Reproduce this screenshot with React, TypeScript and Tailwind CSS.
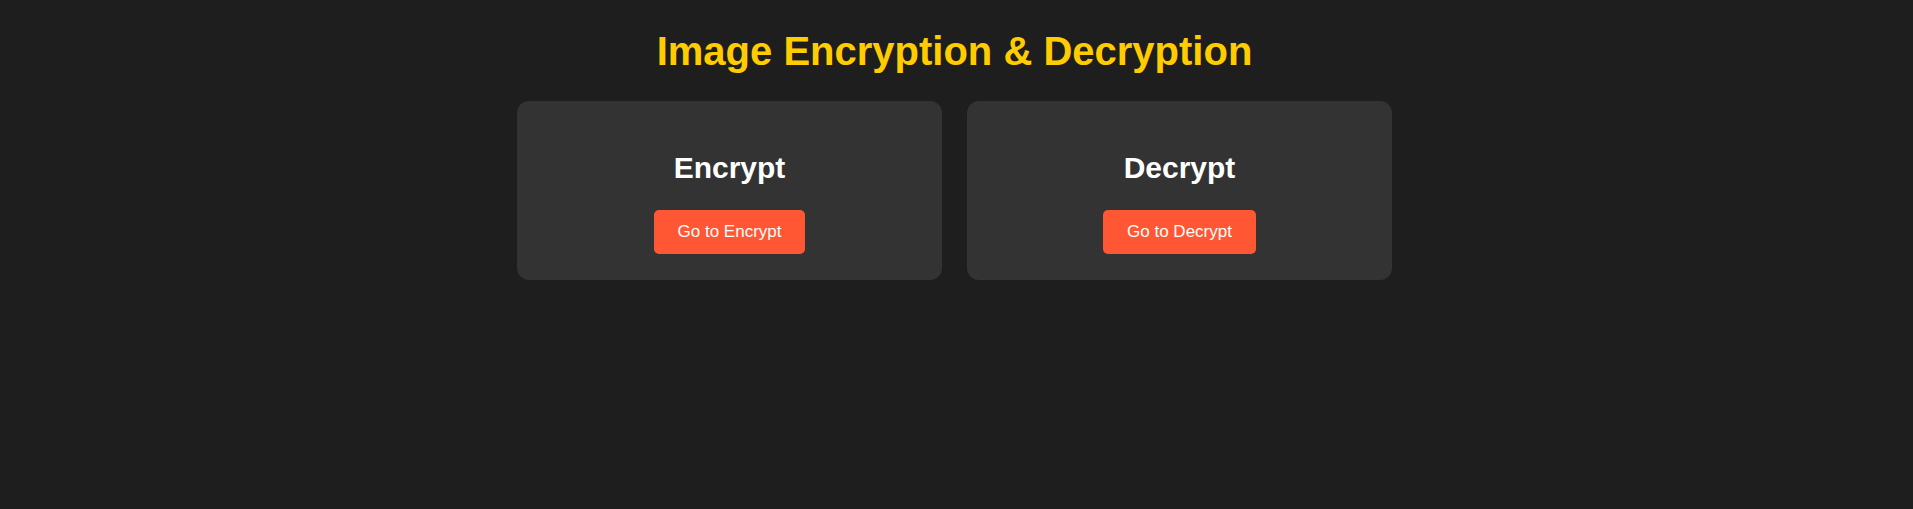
import React from "react";

function Card({ title, label }: { title: string; label: string }) {
  return (
    <div className="w-[425px] h-[179px] bg-[#333333] rounded-[12px] flex flex-col items-center pt-[50px]">
      <h2 className="text-[30px] font-bold text-white leading-[34px] m-0">{title}</h2>
      <button className="mt-[25px] h-[44px] px-[24px] bg-[#ff5733] text-white text-[17px] rounded-[5px]">
        {label}
      </button>
    </div>
  );
}

export default function App() {
  return (
    <div
      className="w-full h-[509px] bg-[#1e1e1e] flex flex-col items-center pt-[28px] pr-[4px]"
      style={{ fontFamily: '"Liberation Sans", Arial, sans-serif' }}
    >
      <h1 className="text-[40px] font-bold text-[#ffcc00] leading-[46px] m-0">
        Image Encryption &amp; Decryption
      </h1>
      <div className="flex gap-[25px] mt-[27px]">
        <Card title="Encrypt" label="Go to Encrypt" />
        <Card title="Decrypt" label="Go to Decrypt" />
      </div>
    </div>
  );
}
